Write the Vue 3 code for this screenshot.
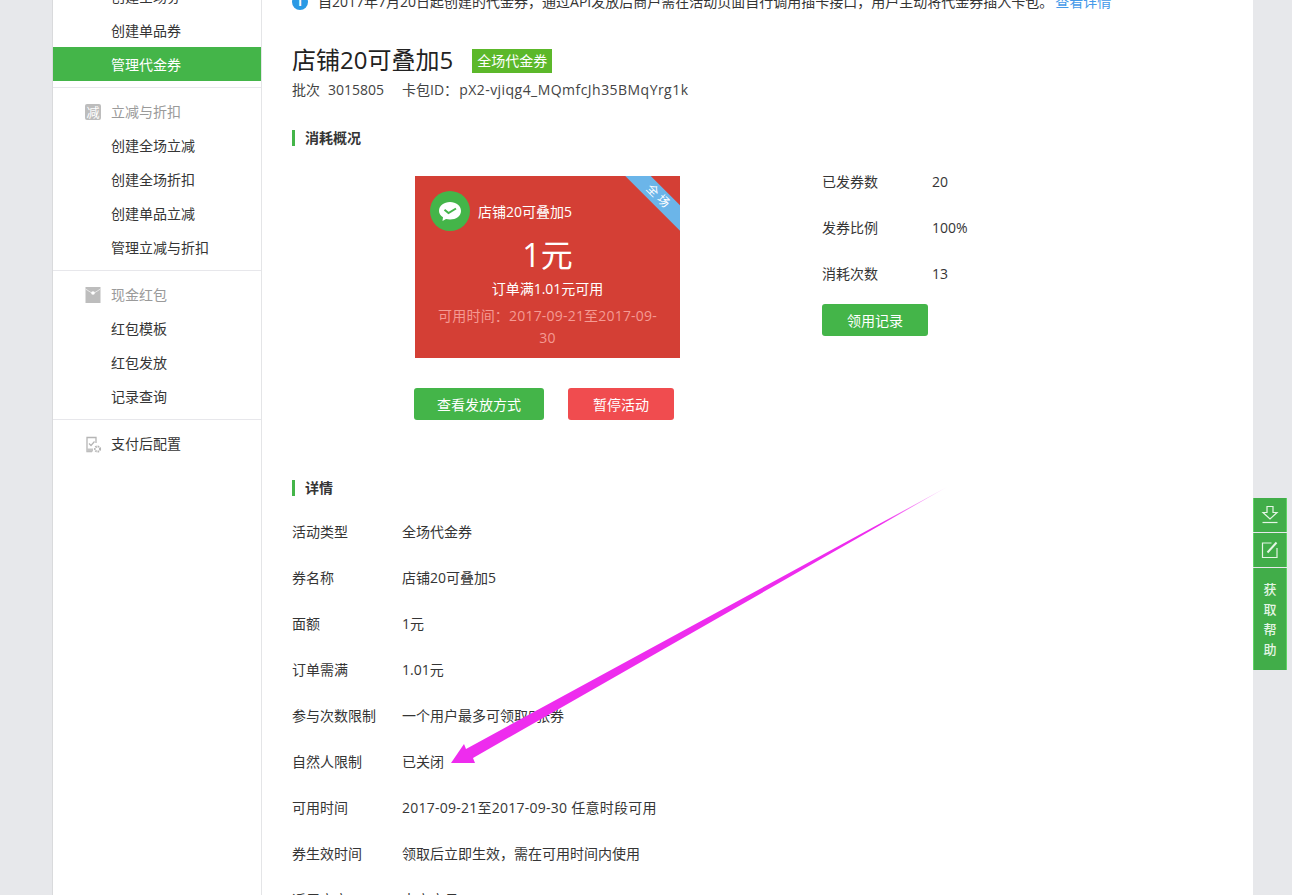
<script setup>
const groups = [
  { items: ['创建全场券', '创建单品券', '管理代金券'], active: '管理代金券', top: true },
  { title: '立减与折扣', icon: 'cut', items: ['创建全场立减', '创建全场折扣', '创建单品立减', '管理立减与折扣'] },
  { title: '现金红包', icon: 'red', items: ['红包模板', '红包发放', '记录查询'] },
]
const usage = [
  ['已发券数', '20'],
  ['发券比例', '100%'],
  ['消耗次数', '13'],
]
const details = [
  { k: '活动类型', v: '全场代金券' },
  { k: '券名称', v: '店铺20可叠加5' },
  { k: '面额', v: '1元' },
  { k: '订单需满', v: '1.01元' },
  { k: '参与次数限制', v: '一个用户最多可领取5张券' },
  { k: '自然人限制', v: '已关闭' },
  { k: '可用时间', v: '2017-09-21至2017-09-30 任意时段可用', wide: true },
  { k: '券生效时间', v: '领取后立即生效，需在可用时间内使用' },
  { k: '适用商户', v: '本商户号(1450000000)', wide: true },
]
</script>

<template>
  <div class="page">
    <div class="frame">
      <aside class="side">
        <section v-for="g in groups" :key="g.items[0]" class="group" :class="{ first: g.top }">
          <div v-if="g.title" class="group-title">
            <span v-if="g.icon === 'cut'" class="ico-cut">减</span>
            <svg v-else class="ico" width="16" height="16" viewBox="0 0 16 16">
              <rect x="0.5" width="15" height="16" fill="#bdbdbd" />
              <path d="M0.500 2 L6 5.500 Q8 6.800 10 5.500 L15.500 2" fill="none" stroke="#e6e6e6" stroke-width="1" />
              <circle cx="8" cy="6" r="1.800" fill="#fff" />
            </svg>
            {{ g.title }}
          </div>
          <a v-for="it in g.items" :key="it" class="item" :class="{ active: it === g.active }">{{ it }}</a>
        </section>
        <section class="group last">
          <div class="group-title dark">
            <svg class="ico" width="18" height="18" viewBox="0 0 18 18">
              <path d="M11 7 V1.500 H2 V15.500 H7" fill="none" stroke="#b5b5b5" stroke-width="1.300" />
              <path d="M2 12.500 H8 V15.500 H2 Z" fill="#c4c4c4" />
              <path d="M4 7.500 L6 9.500 L9.500 5.500" fill="none" stroke="#b5b5b5" stroke-width="1.200" />
              <circle cx="12.500" cy="13" r="2.600" fill="none" stroke="#b5b5b5" stroke-width="2" stroke-dasharray="1.600 0.800" />
            </svg>
            支付后配置
          </div>
        </section>
      </aside>

      <main class="main">
        <p class="notice">
          <span class="notice-ico">i</span>
          <span>自2017年7月20日起创建的代金券，通过API发放后商户需在活动页面自行调用插卡接口，用户主动将代金券插入卡包。</span>
          <a class="link">查看详情</a>
        </p>

        <div class="title-row">
          <h1>店铺20可叠加5</h1>
          <span class="tag">全场代金券</span>
        </div>
        <p class="sub"><span class="sub-k">批次</span><span>3015805</span><span class="sub-id">卡包ID：<span class="code">pX2-vjiqg4_MQmfcJh35BMqYrg1k</span></span></p>

        <h2 class="head overview-head">消耗概况</h2>
        <div class="overview">
          <div>
            <div class="card">
              <div class="ribbon"><span>全场</span></div>
              <div class="card-top">
                <svg width="40" height="40" viewBox="0 0 40 40">
                  <circle cx="20" cy="20" r="20" fill="#44b549" />
                  <path d="M9 20 C9 14.500 14 11 20 11 C26 11 31 14.500 31 20 C31 25 26 28.500 20 28.500 C18.500 28.500 17.200 28.300 16 28 L12.500 30 L13 26.200 C10.500 24.600 9 22.500 9 20 Z" fill="#fff" />
                  <path d="M14.500 18.800 L18.500 22 L26 17.500" fill="none" stroke="#44b549" stroke-width="2" />
                </svg>
                <span>店铺20可叠加5</span>
              </div>
              <div class="amount">1元</div>
              <div class="cond">订单满1.01元可用</div>
              <div class="period">可用时间：2017-09-21至2017-09-30</div>
            </div>
            <div class="actions">
              <button class="btn wide">查看发放方式</button>
              <button class="btn red">暂停活动</button>
            </div>
          </div>
          <div class="usage">
            <div v-for="u in usage" :key="u[0]" class="row">
              <span class="k">{{ u[0] }}</span><span>{{ u[1] }}</span>
            </div>
            <button class="btn record">领用记录</button>
          </div>
        </div>

        <h2 class="head detail-head">详情</h2>
        <div class="details">
          <div v-for="d in details" :key="d.k" class="row">
            <span class="k">{{ d.k }}</span><span :class="{ spaced: d.wide }">{{ d.v }}</span>
          </div>
        </div>
      </main>
    </div>

    <div class="float">
      <a class="float-btn">
        <svg width="18" height="20" viewBox="0 0 18 20" fill="none" stroke="#e4f5e5" stroke-width="1.200">
          <path d="M6 1.500 H12 V7.500 H16 L9 14 L2 7.500 H6 Z" />
          <path d="M1.500 17.500 H16.500" />
        </svg>
      </a>
      <a class="float-btn">
        <svg width="18" height="18" viewBox="0 0 18 18" fill="none" stroke="#e4f5e5" stroke-width="1.200">
          <path d="M10.500 2 H1.500 V16.500 H16 V7" />
          <path d="M6.500 11.500 L15.500 1.500" stroke-width="2" />
        </svg>
      </a>
      <a class="float-btn help"><span>获</span><span>取</span><span>帮</span><span>助</span></a>
    </div>

    <svg class="arrow" width="1292" height="895" viewBox="0 0 1292 895">
      <defs>
        <linearGradient id="fade" gradientUnits="userSpaceOnUse" x1="880" y1="524" x2="947" y2="487">
          <stop offset="0" stop-color="#ee2cee" />
          <stop offset="1" stop-color="#ee2cee" stop-opacity="0.2" />
        </linearGradient>
      </defs>
      <path d="M451 763 L464 744 L466 749 L947 487 L473 758 L475 763 Z" fill="url(#fade)" />
    </svg>
  </div>
</template>

<style scoped>
.page {
  position: relative;
  height: 895px;
  overflow: hidden;
  background: #e7e8eb;
  font-family: "Open Sans", "Noto Sans CJK SC", sans-serif;
  font-size: 14px;
  color: #353535;
}
.frame {
  display: flex;
  width: 1201px;
  height: 100%;
  margin-left: 52px;
  box-sizing: border-box;
  border-left: 1px solid #d9dadc;
  background: #fff;
}
.side {
  width: 209px;
  flex: none;
  box-sizing: border-box;
  border-right: 1px solid #e4e5e7;
}
.group {
  padding: 7px 0 5px;
  border-bottom: 1px solid #e7e7eb;
}
.group.first {
  margin-top: -21px;
  padding: 0 0 6px;
}
.group.first .item {
  line-height: 36px;
}
.group.last {
  border-bottom: 0;
}
.group-title,
.item {
  display: block;
  height: 34px;
  line-height: 34px;
  padding-left: 58px;
}
.group-title {
  position: relative;
  color: #9a9a9a;
}
.group-title.dark {
  color: #353535;
}
.item {
  color: #353535;
}
.item.active {
  background: #44b549;
  color: #fff;
}
.ico,
.ico-cut {
  position: absolute;
  left: 32px;
  top: 9px;
}
.ico-cut {
  width: 16px;
  height: 16px;
  border-radius: 2px;
  background: #bdbdbd;
  color: #fff;
  font-size: 13px;
  line-height: 16px;
  text-align: center;
  padding: 0;
}
.main {
  flex: 1;
  padding-left: 30px;
}
.notice {
  display: flex;
  align-items: center;
  margin: -8px 0 31px;
  height: 20px;
  line-height: 20px;
  white-space: nowrap;
}
.notice-ico {
  flex: none;
  width: 16px;
  height: 16px;
  margin-right: 10px;
  border-radius: 50%;
  background: #2a9ae5;
  color: #fff;
  font-size: 12px;
  font-weight: 700;
  line-height: 16px;
  text-align: center;
}
.link {
  margin-left: 2px;
  color: #459ae9;
}
.title-row {
  display: flex;
  align-items: center;
  height: 34px;
}
h1 {
  margin: 0 19px 0 0;
  font-size: 24px;
  font-weight: 400;
  line-height: 34px;
  color: #222;
}
.tag {
  width: 80px;
  height: 24px;
  margin-top: 2px;
  background: #5cb82a;
  color: #fff;
  line-height: 24px;
  text-align: center;
}
.sub {
  margin: 3px 0 0;
  height: 20px;
  line-height: 20px;
  color: #444;
}
.sub-k {
  margin-right: 8px;
}
.sub-id {
  margin-left: 18px;
}
.code {
  margin-left: 1px;
  letter-spacing: 0.46px;
}
.head {
  margin: 0;
  height: 16px;
  padding-left: 10px;
  border-left: 3px solid #44b549;
  font-size: 14px;
  font-weight: 700;
  line-height: 16px;
  color: #353535;
}
.overview-head {
  margin-top: 30px;
}
.overview {
  display: grid;
  grid-template-columns: 408px 1fr;
  padding: 30px 0 0 122px;
}
.card {
  position: relative;
  width: 265px;
  height: 182px;
  margin-left: 1px;
  overflow: hidden;
  background: #d43f35;
  color: #fff;
  text-align: center;
}
.card-top {
  display: flex;
  align-items: center;
  gap: 8px;
  padding: 15px 0 0 15px;
  height: 40px;
}
.ribbon {
  position: absolute;
  top: 12px;
  right: -29px;
  width: 100px;
  height: 18px;
  background: #6bb5e9;
  line-height: 18px;
  font-size: 12px;
  letter-spacing: 3px;
  transform: rotate(45deg);
}
.amount {
  margin-top: 4px;
  height: 40px;
  font-size: 32px;
  line-height: 40px;
}
.cond {
  margin-top: 3px;
  height: 22px;
  line-height: 22px;
}
.period {
  margin-top: 5px;
  padding: 0 20px;
  line-height: 22px;
  letter-spacing: 0.2px;
  color: #f59a93;
}
.actions {
  display: flex;
  gap: 24px;
  margin-top: 30px;
}
.btn {
  display: block;
  box-sizing: border-box;
  width: 106px;
  height: 32px;
  padding: 2px 0 0;
  border: 0;
  border-radius: 3px;
  background: #44b549;
  color: #fff;
  font: inherit;
  line-height: 30px;
}
.btn.wide {
  width: 130px;
}
.btn.red {
  background: #f04c4f;
}
.usage {
  margin-top: -17px;
}
.row {
  display: flex;
  height: 46px;
  line-height: 46px;
  white-space: nowrap;
}
.k {
  flex: none;
  width: 110px;
}
.spaced {
  letter-spacing: 0.25px;
}
.record {
  margin-top: 7px;
}
.detail-head {
  margin-top: 60px;
}
.details {
  margin-top: 13px;
}
.float {
  position: absolute;
  left: 1253px;
  top: 498px;
  display: flex;
  flex-direction: column;
  gap: 1px;
  width: 34px;
}
.float-btn {
  display: flex;
  align-items: center;
  justify-content: center;
  box-sizing: border-box;
  height: 34px;
  background: #41ad49;
  border: 1px solid #5ed365;
  border-width: 0 1px;
  color: #e4f5e5;
}
.float-btn.help {
  flex-direction: column;
  height: 102px;
  line-height: 20px;
  font-size: 13px;
  font-weight: 500;
}
.arrow {
  position: absolute;
  inset: 0;
  pointer-events: none;
}
</style>

<style>
html, body {
  margin: 0;
  overflow: hidden;
}
</style>
